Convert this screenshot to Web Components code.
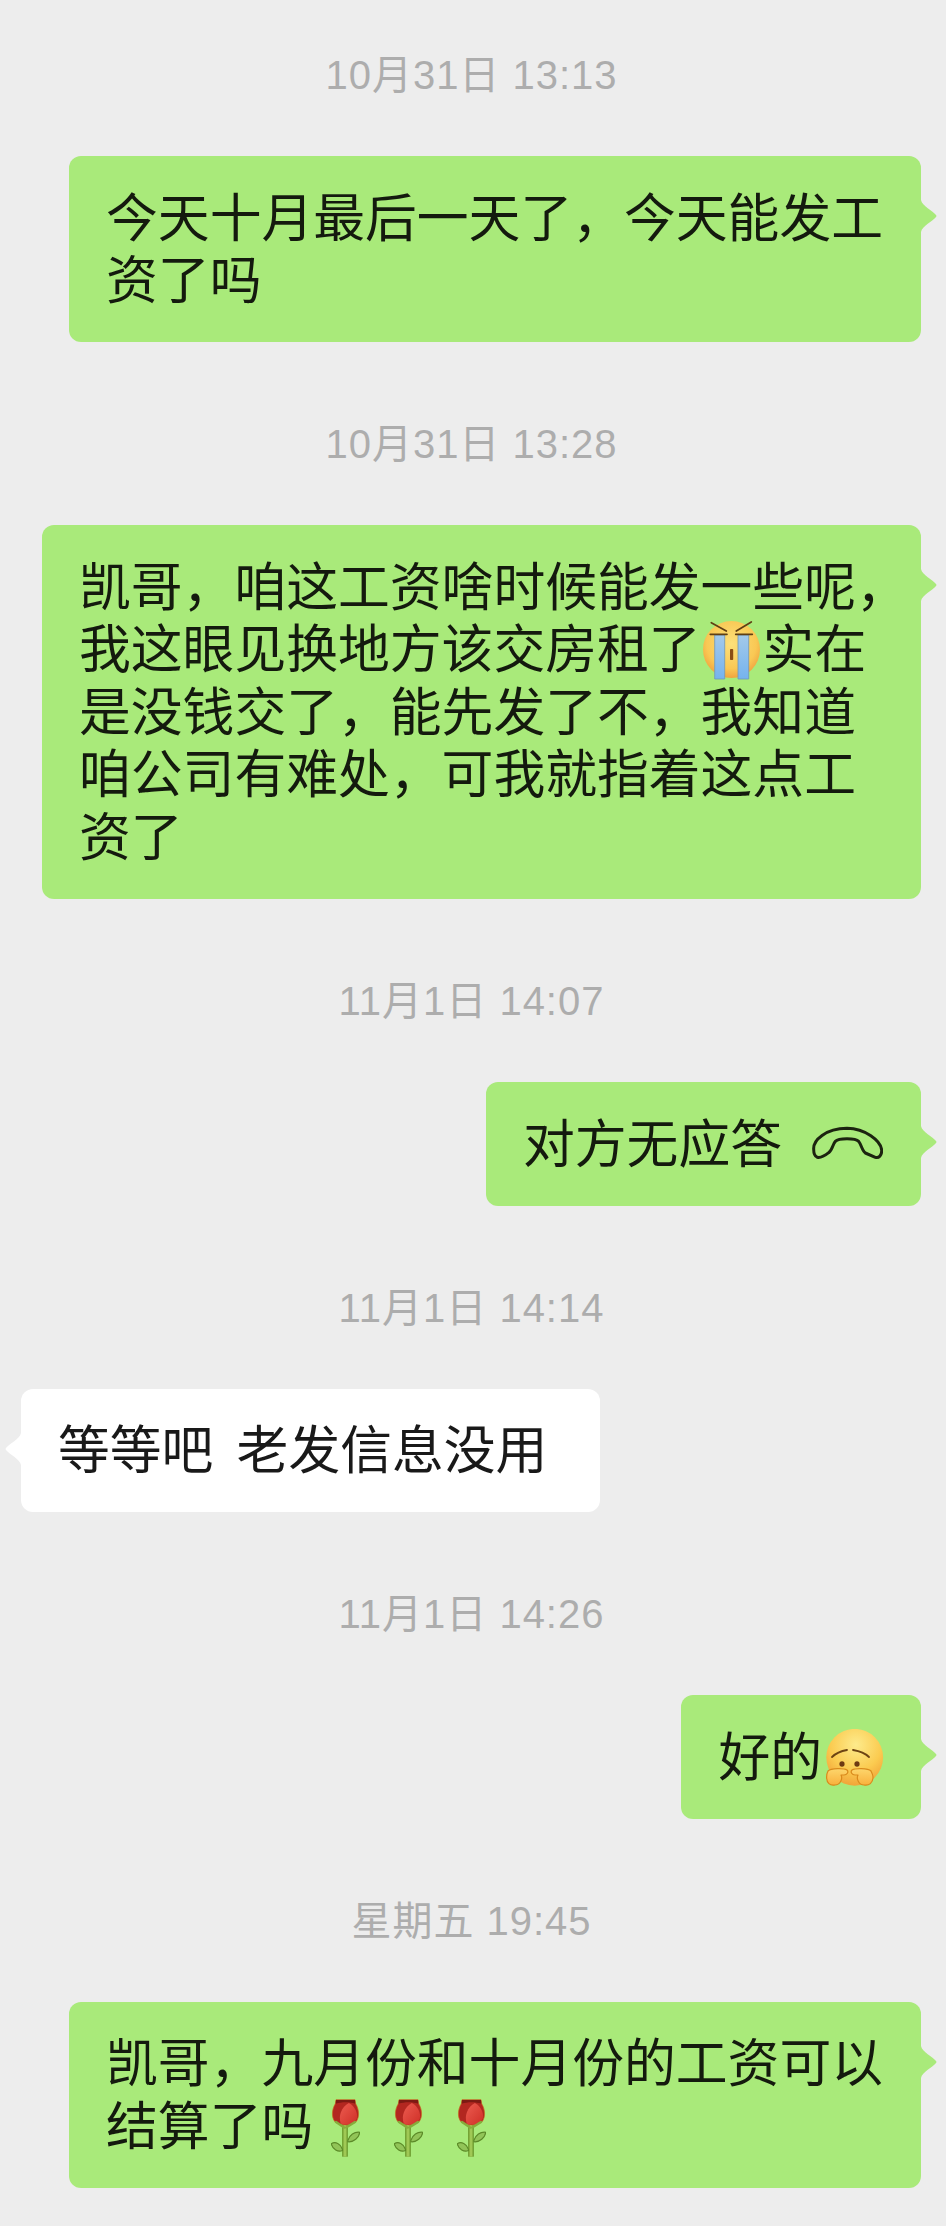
<!DOCTYPE html>
<html lang="zh-CN">
<head>
<meta charset="utf-8">
<title>聊天记录</title>
<style>
  html, body { margin: 0; padding: 0; background: #ededed; }
</style>
</head>
<body>
<chat-page>
  <chat-time>10月31日 13:13</chat-time>
  <chat-bubble side="out">今天十月最后一天了，今天能发工<br>资了吗</chat-bubble>

  <chat-time>10月31日 13:28</chat-time>
  <chat-bubble side="out" style="width: 879px">凯哥，咱这工资啥时候能发一些呢，<br>我这眼见换地方该交房租了<chat-emoji name="cry"></chat-emoji>实在<br>是没钱交了，能先发了不，我知道<br>咱公司有难处，可我就指着这点工<br>资了</chat-bubble>

  <chat-time>11月1日 14:07</chat-time>
  <chat-bubble side="out">对方无应答<call-icon></call-icon></chat-bubble>

  <chat-time>11月1日 14:14</chat-time>
  <chat-bubble side="in" style="width: 579px">等等吧  老发信息没用</chat-bubble>

  <chat-time>11月1日 14:26</chat-time>
  <chat-bubble side="out">好的<chat-emoji name="shy"></chat-emoji></chat-bubble>

  <chat-time>星期五 19:45</chat-time>
  <chat-bubble side="out">凯哥，九月份和十月份的工资可以<br>结算了吗<chat-emoji name="rose"></chat-emoji><chat-emoji name="rose"></chat-emoji><chat-emoji name="rose"></chat-emoji></chat-bubble>
</chat-page>

<script>
class ChatPage extends HTMLElement {
  constructor() {
    super();
    this.attachShadow({ mode: 'open' }).innerHTML = `
      <style>
        :host {
          display: flex;
          flex-direction: column;
          box-sizing: border-box;
          height: 2226px;
          padding-top: 50px;
          background: #ededed;
          overflow: hidden;
          font-family: "Noto Sans CJK SC", "Liberation Sans", sans-serif;
        }
        .end { margin-top: auto; height: 3px; border-top: 1px solid #d6d6d6; background: #f0f0f0; }
      </style>
      <slot></slot>
      <div class="end"></div>`;
  }
}

class ChatTime extends HTMLElement {
  constructor() {
    super();
    this.attachShadow({ mode: 'open' }).innerHTML = `
      <style>
        :host {
          display: block;
          height: 50px;
          line-height: 50px;
          margin: 0 0 56px;
          padding-right: 3px;
          text-align: center;
          color: #adadad;
          font-family: "Liberation Sans", "Noto Sans CJK SC", sans-serif;
          font-size: 40px;
          letter-spacing: 1px;
          white-space: nowrap;
        }
      </style>
      <slot></slot>`;
  }
}

class ChatBubble extends HTMLElement {
  constructor() {
    super();
    this.attachShadow({ mode: 'open' }).innerHTML = `
      <style>
        :host {
          display: block;
          position: relative;
          box-sizing: border-box;
          align-self: flex-end;
          margin: 0 25px 77px 0;
          padding: 27.5px 38px 33.5px 37px;
          border-radius: 12px;
          background: #a9ea7a;
          color: #141a0e;
          font-size: 51.8px;
          line-height: 62.6px;
        }
        :host([side="in"]) {
          align-self: flex-start;
          margin: 0 0 77px 21px;
          background: #fff;
          color: #191919;
        }
        .text { white-space: pre; }
        .tail { position: absolute; top: 44px; left: 100%; fill: #a9ea7a; }
        :host([side="in"]) .tail { left: auto; right: 100%; transform: scaleX(-1); fill: #fff; }
      </style>
      <svg class="tail" width="16" height="32" viewBox="0 0 16 32"><path d="M0 0C1 6 12 11 15 15Q16 16 15 17C12 21 1 26 0 32Z"/></svg>
      <div class="text"><slot></slot></div>`;
  }
}

const EMOJI = {
  cry: { slot: 62, left: 2, top: 6, svg: `
    <svg width="57" height="59" viewBox="0 0 57 59">
      <defs>
        <radialGradient id="f" cx=".5" cy=".4" r=".62"><stop offset="0" stop-color="#fde07a"/><stop offset=".7" stop-color="#f9c854"/><stop offset="1" stop-color="#ef9f3c"/></radialGradient>
        <linearGradient id="t" x1="0" y1="0" x2="0" y2="1"><stop offset="0" stop-color="#a3c9ea"/><stop offset="1" stop-color="#75b3ee"/></linearGradient>
      </defs>
      <circle cx="28.5" cy="28.5" r="28.5" fill="url(#f)"/>
      <path d="M11.7 14H21.7V58H11.7ZM35 14H45.7V58H35Z" fill="url(#t)" stroke="#6f97b8" stroke-width=".8"/>
      <path d="M8.3 1.7 23.3 10M48.3 1 33.3 10M7.3 13.3H24M32.7 13.3H49.3" stroke="#5f3f14" stroke-width="1.7" stroke-linecap="round" fill="none"/>
      <rect x="27" y="28" width="3.2" height="11" rx=".8" fill="#8a4d14"/>
    </svg>` },
  shy: { slot: 61, left: 4, top: 6, svg: `
    <svg width="58" height="58" viewBox="0 0 58 58">
      <defs>
        <radialGradient id="f" cx=".52" cy=".28" r=".75"><stop offset="0" stop-color="#fdeb8c"/><stop offset=".6" stop-color="#fbcb50"/><stop offset="1" stop-color="#f0a036"/></radialGradient>
        <linearGradient id="h" x1="0" y1="0" x2="0" y2="1"><stop offset="0" stop-color="#fdd66c"/><stop offset="1" stop-color="#f9b03c"/></linearGradient>
      </defs>
      <circle cx="28.7" cy="28.3" r="28.4" fill="url(#f)"/>
      <path d="M6 28C10 24 15 22 21 21M27 21C33 22 39 24 43 28" stroke="#6d4413" stroke-width="1.8" stroke-linecap="round" fill="none"/>
      <ellipse cx="16" cy="35" rx="2.6" ry="2.8" fill="#6e3a12"/>
      <ellipse cx="31" cy="35" rx="2.6" ry="2.8" fill="#6e3a12"/>
      <path d="M2 42C5 39 18 39 21 41C23 43 21 46 18 46L15 46C17 50 14 56 9 56C4 57 .6 54 .6 48C.6 46 1 44 2 42Z" fill="url(#h)" stroke="#d98a1c" stroke-width="1.2" stroke-linejoin="round"/>
      <path d="M45 42C42 39 29 39 26 41C24 43 26 46 29 46L32 46C30 50 33 56 38 56C43 57 47 54 47 48C47 46 46 44 45 42Z" fill="url(#h)" stroke="#d98a1c" stroke-width="1.2" stroke-linejoin="round"/>
    </svg>` },
  rose: { slot: 63, left: 18, top: 7, svg: `
    <svg width="29" height="58" viewBox="0 0 84 171">
      <defs>
        <linearGradient id="r" x1="0" y1="0" x2="1" y2="1"><stop offset="0" stop-color="#ec5c50"/><stop offset="1" stop-color="#cf2f27"/></linearGradient>
      </defs>
      <path d="M32 76H49V170H32Z" fill="#6d9a2e"/>
      <path d="M36 76H45V170H36Z" fill="#a0c855"/>
      <path d="M33 148C28 132 12 124 0 132C4 148 20 158 33 152Z" fill="#92c458" stroke="#5c8a28" stroke-width="3.5"/>
      <path d="M49 122C54 106 68 96 84 98C82 114 66 128 49 126Z" fill="#92c458" stroke="#5c8a28" stroke-width="3.5"/>
      <path d="M14 2H70L72 14C82 30 84 52 74 66C60 80 24 80 10 66C0 52 2 30 12 14Z" fill="#b32720" stroke="#c8691f" stroke-width="2"/>
      <path d="M14 3H70L71 14C55 8 30 8 13 14Z" fill="#7c1a13"/>
      <path d="M28 72C20 50 30 24 52 12C68 20 80 42 75 58C68 74 44 80 28 72Z" fill="url(#r)"/>
      <path d="M14 68 38 84M70 68 44 84" stroke="#86ad3b" stroke-width="7" stroke-linecap="round"/>
    </svg>` }
};

class ChatEmoji extends HTMLElement {
  constructor() {
    super();
    const e = EMOJI[this.getAttribute('name')];
    this.attachShadow({ mode: 'open' }).innerHTML = `
      <style>
        :host {
          display: inline-block;
          vertical-align: top;
          white-space: normal;
          width: ${e.slot}px;
          height: 62px;
        }
        svg { display: block; margin: ${e.top}px 0 0 ${e.left}px; }
      </style>
      ${e.svg}`;
  }
}

class CallIcon extends HTMLElement {
  constructor() {
    super();
    this.attachShadow({ mode: 'open' }).innerHTML = `
      <style>
        :host {
          display: inline-block;
          vertical-align: top;
          white-space: normal;
          width: 71px;
          height: 34px;
          margin: 16px 0 0 30px;
        }
        svg { display: block; }
      </style>
      <svg width="71" height="34" viewBox="400 196 213 102">
        <path d="M405 265C404 238 440 204 505 203C560 204 606 240 609 268C610 285 600 293 590 290L560 277C550 270 548 252 540 242C530 232 480 232 470 242C462 250 462 268 450 276C440 284 425 292 416 290C408 287 405 277 405 265Z"
          fill="none" stroke="#1c2410" stroke-width="9" stroke-linejoin="round"/>
      </svg>`;
  }
}

customElements.define('chat-page', ChatPage);
customElements.define('chat-time', ChatTime);
customElements.define('chat-bubble', ChatBubble);
customElements.define('chat-emoji', ChatEmoji);
customElements.define('call-icon', CallIcon);
</script>
</body>
</html>
